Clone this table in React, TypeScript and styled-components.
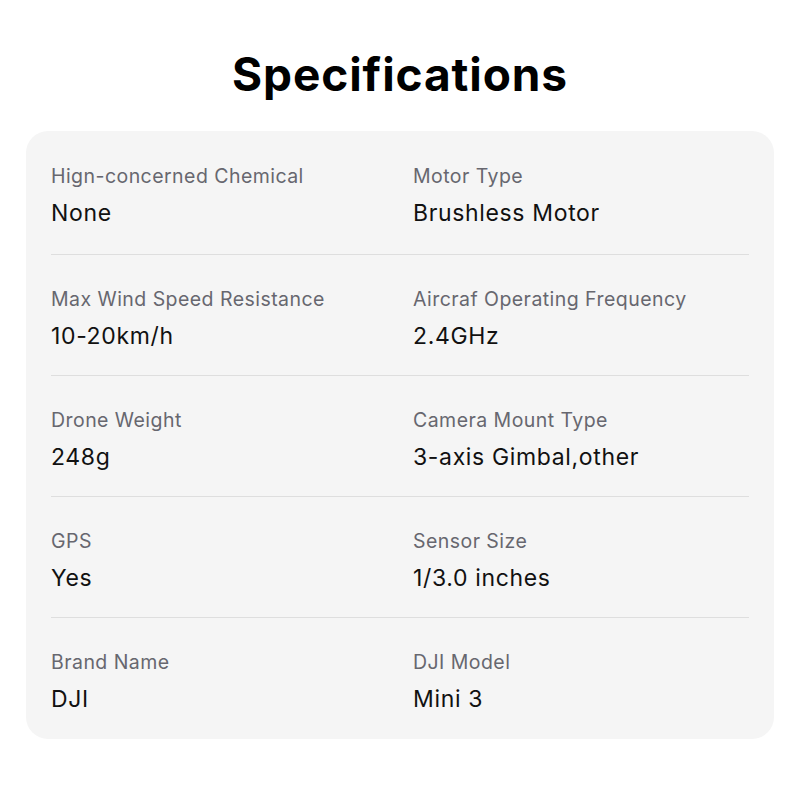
import React from "react";
import styled, { createGlobalStyle } from "styled-components";

const Global = createGlobalStyle`
  html, body { margin: 0; padding: 0; background: #ffffff; }
  body { font-family: Inter, "Noto Sans", sans-serif; }
`;

const Page = styled.div`
  width: 800px;
  height: 800px;
  box-sizing: border-box;
  padding: 0 26px 0 26px;
  display: flex;
  flex-direction: column;
`;

const Title = styled.h1`
  margin: 0;
  height: 131px;
  box-sizing: border-box;
  padding-top: 44px;
  text-align: center;
  font-family: Inter, sans-serif;
  font-weight: 700;
  font-size: 46px;
  line-height: 60px;
  color: #000;
  letter-spacing: 0.9px;
`;

const Card = styled.div`
  background: #f5f5f5;
  border-radius: 22px;
  padding: 0 25px;
  display: flex;
  flex-direction: column;
`;

const Row = styled.div<{ $last?: boolean }>`
  display: grid;
  grid-template-columns: 362px 1fr;
  height: 121px;
  box-sizing: border-box;
  padding-top: 32px;
  border-bottom: ${(p) => (p.$last ? "none" : "1px solid #dedede")};

  &:first-child {
    height: 124px;
    padding-top: 33px;
  }
`;

const Cell = styled.div`
  display: flex;
  flex-direction: column;
  gap: 11px;
`;

const Label = styled.div`
  font-size: 19.5px;
  line-height: 24px;
  color: #67676f;
  letter-spacing: 0.45px;
`;

const Value = styled.div`
  font-size: 23px;
  line-height: 28px;
  color: #111;
  letter-spacing: 0.65px;
`;

const data: [string, string, string, string][] = [
  ["Hign-concerned Chemical", "None", "Motor Type", "Brushless Motor"],
  ["Max Wind Speed Resistance", "10-20km/h", "Aircraf Operating Frequency", "2.4GHz"],
  ["Drone Weight", "248g", "Camera Mount Type", "3-axis Gimbal,other"],
  ["GPS", "Yes", "Sensor Size", "1/3.0 inches"],
  ["Brand Name", "DJI", "DJI Model", "Mini 3"],
];

export default function App() {
  return (
    <>
      <Global />
      <Page>
        <Title>Specifications</Title>
        <Card>
          {data.map((r, i) => (
            <Row key={i} $last={i === data.length - 1}>
              <Cell>
                <Label>{r[0]}</Label>
                <Value>{r[1]}</Value>
              </Cell>
              <Cell>
                <Label>{r[2]}</Label>
                <Value>{r[3]}</Value>
              </Cell>
            </Row>
          ))}
        </Card>
      </Page>
    </>
  );
}
